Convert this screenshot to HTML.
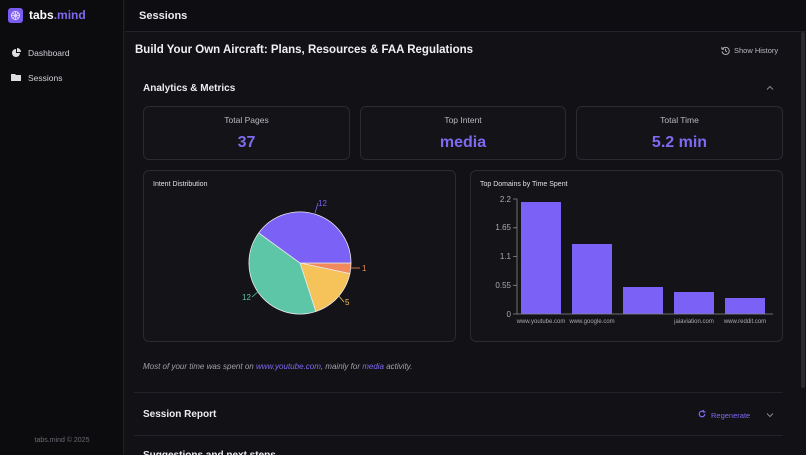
<!DOCTYPE html>
<html style="overflow:hidden;width:806px;height:455px"><head><meta charset="utf-8"><style>
*{margin:0;padding:0;box-sizing:border-box}
body{width:806px;height:455px;overflow:hidden;background:#111116;font-family:"Liberation Sans",sans-serif;position:relative;color:#e8e8ec}
.abs{position:absolute}
.side{left:0;top:0;width:124px;height:455px;background:#0c0c0f;border-right:1px solid #1f1f25}
.hdr{left:125px;top:0;width:681px;height:32px;background:#0e0e12;border-bottom:1px solid #22222a}
.card{position:absolute;background:#141418;border:1px solid #2a2a31;border-radius:6px}
.mt{position:absolute;width:100%;text-align:center;font-size:8.5px;color:#b8b8c0;top:8px}
.mv{position:absolute;width:100%;text-align:center;font-size:16px;font-weight:bold;color:#7d6af0;top:27px}
.ct{position:absolute;left:9px;top:10px;font-size:7px;color:#e0e0e6}
</style></head><body>
<div class="abs side">
  <div class="abs" style="left:8px;top:8px;width:15px;height:15px;border-radius:3px;background:#7b5cf0"></div>
  <svg class="abs" style="left:10px;top:10px" width="11" height="11" viewBox="0 0 11 11"><circle cx="5.5" cy="5.5" r="4" fill="none" stroke="#e6defe" stroke-width="1"/><path d="M5.5 1.5V9.5M1.5 5.5H9.5M3 3L8 8M8 3L3 8" stroke="#e6defe" stroke-width=".8"/></svg>
  <div class="abs" style="left:29px;top:8px;font-size:12px;font-weight:bold;color:#fff">tabs<span style="color:#7d6af0">.mind</span></div>
  <svg class="abs" style="left:11px;top:48px" width="10" height="10" viewBox="0 0 10 10"><path d="M5 1A4 4 0 1 0 9 5H5Z" fill="#ddd"/><path d="M6 0A4 4 0 0 1 10 4H6Z" fill="#ddd"/></svg>
  <div class="abs" style="left:28px;top:48px;font-size:8.5px;color:#d0d0d6">Dashboard</div>
  <svg class="abs" style="left:11px;top:73px" width="10" height="9" viewBox="0 0 10 9"><path d="M0 1H4L5 2H10V8H0Z" fill="#ddd"/></svg>
  <div class="abs" style="left:28px;top:73px;font-size:8.5px;color:#d0d0d6">Sessions</div>
  <div class="abs" style="left:0;width:124px;text-align:center;top:437px;font-size:7px;color:#6a6a72">tabs.mind © 2025</div>
</div>
<div class="abs hdr"><div class="abs" style="left:14px;top:10px;font-size:11px;font-weight:bold;color:#ececf0">Sessions</div></div>
<div class="abs" style="left:801px;top:32px;width:4px;height:356px;background:#2a2a31;border-radius:2px"></div>
<div class="abs" style="left:135px;top:44px;font-size:11.5px;font-weight:bold;color:#f0f0f4">Build Your Own Aircraft: Plans, Resources &amp; FAA Regulations</div>
<svg class="abs" style="left:721px;top:46px" width="9" height="9" viewBox="0 0 10 10"><path d="M2 3A4 4 0 1 1 1.2 6M1 1V3.5H3.5M5 3V5.3L6.6 6.5" fill="none" stroke="#bbb" stroke-width="1"/></svg>
<div class="abs" style="left:734px;top:46px;font-size:7.5px;color:#b8b8c0">Show History</div>
<div class="abs" style="left:143px;top:83px;font-size:10px;font-weight:bold;color:#ececf0">Analytics &amp; Metrics</div>
<svg class="abs" style="left:766px;top:85px" width="8" height="6" viewBox="0 0 8 6"><path d="M1 4.5L4 1.5L7 4.5" fill="none" stroke="#888" stroke-width="1"/></svg>
<div class="card" style="left:143px;top:106px;width:207px;height:54px"><div class="mt">Total Pages</div><div class="mv">37</div></div>
<div class="card" style="left:360px;top:106px;width:206px;height:54px"><div class="mt">Top Intent</div><div class="mv">media</div></div>
<div class="card" style="left:576px;top:106px;width:207px;height:54px"><div class="mt">Total Time</div><div class="mv">5.2 min</div></div>
<div class="card" style="left:143px;top:170px;width:313px;height:172px"><div class="ct">Intent Distribution</div>
<svg class="abs" style="left:-1px;top:-1px" width="313" height="172" viewBox="143 170 313 172">
<g stroke="#e8e8e8" stroke-width=".8">
<path d="M300 263L351 263A51 51 0 0 1 349.9 273.6Z" fill="#f08a5d"/>
<path d="M300 263L349.9 273.6A51 51 0 0 1 315.8 311.5Z" fill="#f6c25a"/>
<path d="M300 263L315.8 311.5A51 51 0 0 1 258.7 233Z" fill="#5cc6a6"/>
<path d="M300 263L258.7 233A51 51 0 0 1 351 263Z" fill="#7b61f5"/>
</g>
<path d="M315 213L318 203" stroke="#7b61f5" stroke-width=".8" fill="none"/>
<text x="318" y="206" font-size="8" fill="#7b61f5" font-family="Liberation Sans">12</text>
<path d="M350 268L360 268" stroke="#f08a5d" stroke-width=".8"/>
<text x="362" y="271" font-size="8" fill="#f08a5d" font-family="Liberation Sans">1</text>
<path d="M337 294L344 302" stroke="#f6c25a" stroke-width=".8"/>
<text x="345" y="305" font-size="8" fill="#f6c25a" font-family="Liberation Sans">5</text>
<path d="M260 290L252 297" stroke="#5cc6a6" stroke-width=".8"/>
<text x="242" y="300" font-size="8" fill="#5cc6a6" font-family="Liberation Sans">12</text>
</svg></div>
<div class="card" style="left:470px;top:170px;width:313px;height:172px"><div class="ct">Top Domains by Time Spent</div>
<svg class="abs" style="left:-1px;top:-1px" width="313" height="172" viewBox="470 170 313 172" font-family="Liberation Sans">
<g fill="#7b61f5"><rect x="521" y="202" width="40" height="112"/><rect x="572" y="244" width="40" height="70"/><rect x="623" y="287" width="40" height="27"/><rect x="674" y="292" width="40" height="22"/><rect x="725" y="298" width="40" height="16"/></g>
<path d="M515 199H517V314H773M513 199H517M513 227.8H517M513 256.5H517M513 285.3H517M513 314H517" stroke="#888" stroke-width=".8" fill="none"/>
<g font-size="8" fill="#aaa" text-anchor="end"><text x="511" y="202">2.2</text><text x="511" y="230">1.65</text><text x="511" y="259">1.1</text><text x="511" y="288">0.55</text><text x="511" y="317">0</text></g>
<g font-size="6" fill="#aaa" text-anchor="middle"><text x="541" y="323">www.youtube.com</text><text x="592" y="323">www.google.com</text><text x="694" y="323">jaiaviation.com</text><text x="745" y="323">www.reddit.com</text></g>
</svg></div>
<div class="abs" style="left:143px;top:362px;font-size:8px;font-style:italic;color:#a0a0a8">Most of your time was spent on <span style="color:#7d6af0">www.youtube.com</span>, mainly for <span style="color:#7d6af0">media</span> activity.</div>
<div class="abs" style="left:134px;top:392px;width:649px;height:1px;background:#22222a"></div>
<div class="abs" style="left:143px;top:409px;font-size:10px;font-weight:bold;color:#ececf0">Session Report</div>
<svg class="abs" style="left:698px;top:410px" width="8" height="8" viewBox="0 0 8 8"><path d="M6.8 4A2.8 2.8 0 1 1 5.5 1.6M5.5 0V2H7.5" fill="none" stroke="#7d6af0" stroke-width="1.2"/></svg>
<div class="abs" style="left:711px;top:411px;font-size:7.5px;color:#7d6af0">Regenerate</div>
<svg class="abs" style="left:766px;top:412px" width="8" height="6" viewBox="0 0 8 6"><path d="M1 1.5L4 4.5L7 1.5" fill="none" stroke="#888" stroke-width="1"/></svg>
<div class="abs" style="left:134px;top:435px;width:649px;height:1px;background:#22222a"></div>
<div class="abs" style="left:143px;top:450px;font-size:10px;font-weight:bold;color:#ececf0">Suggestions and next steps</div>
</body></html>
